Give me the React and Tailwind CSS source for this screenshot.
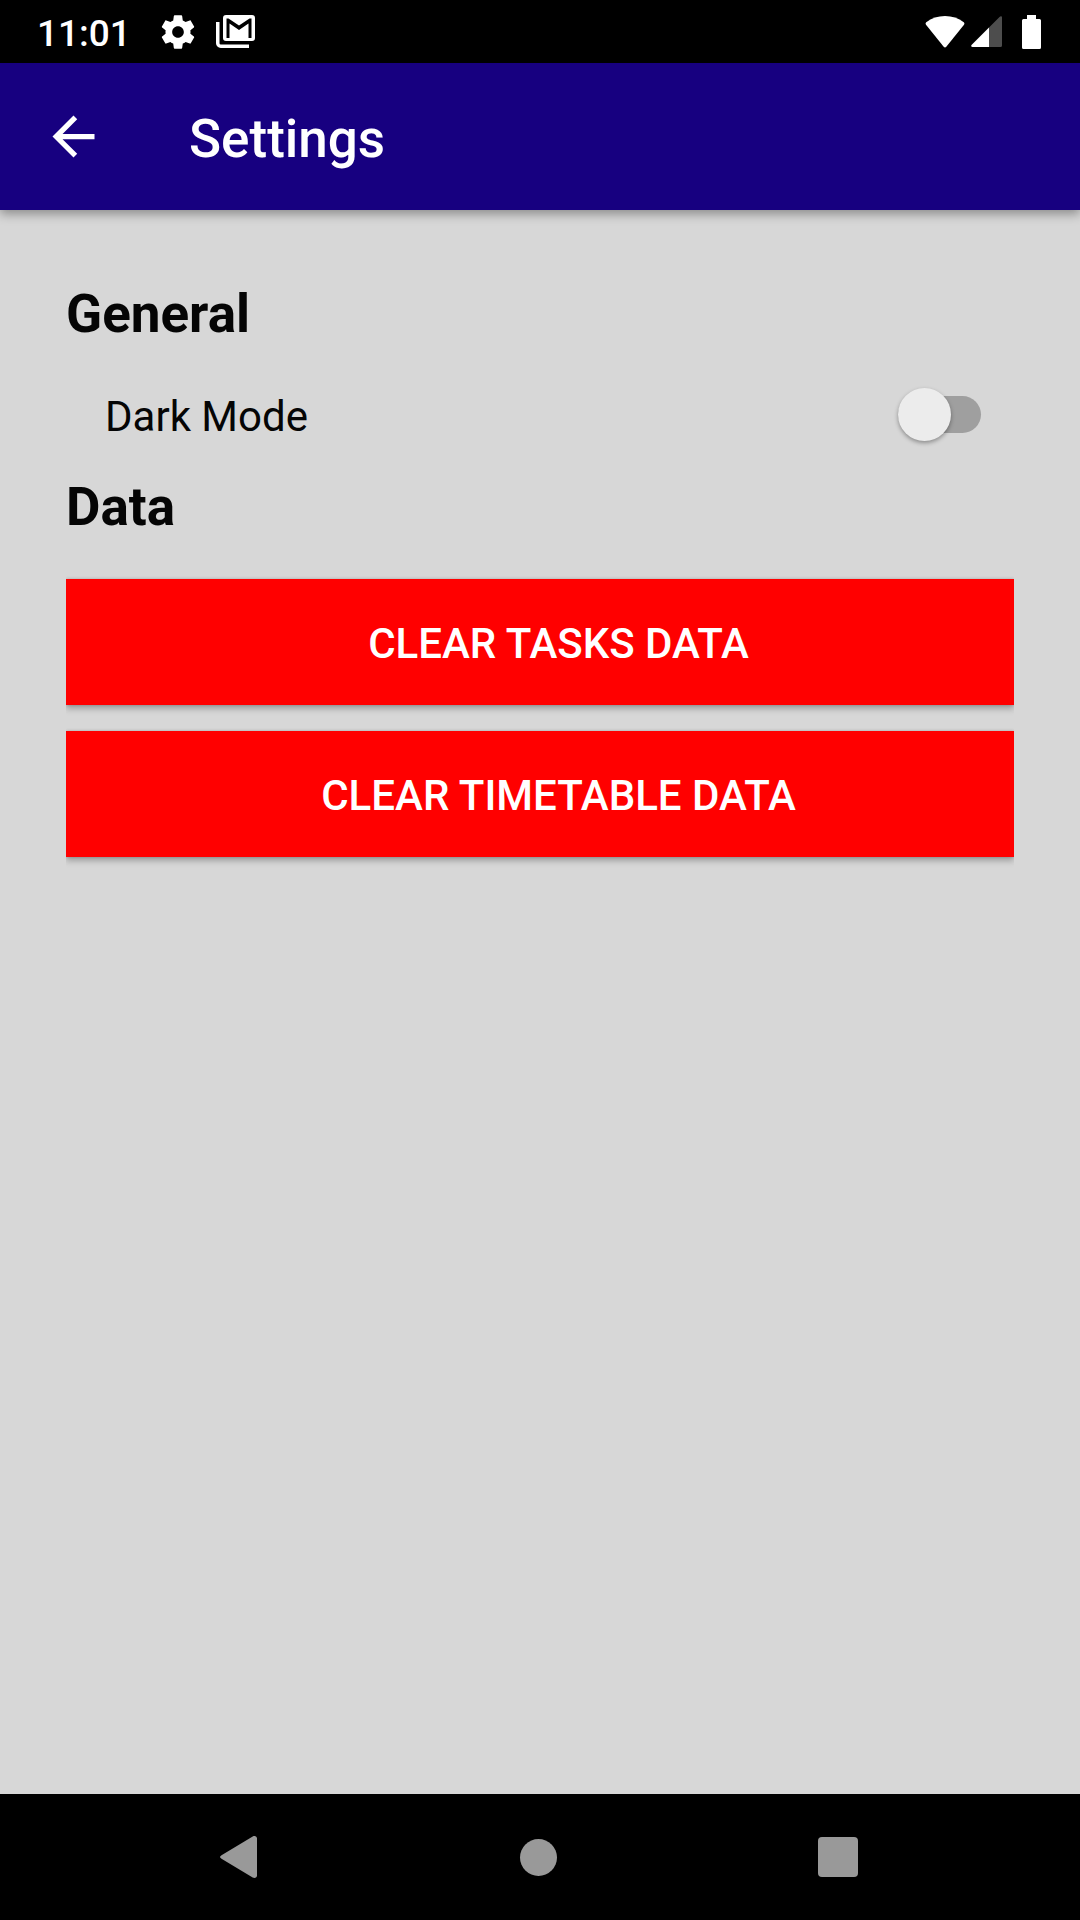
import { useState } from "react";

function StatusBar() {
  return (
    <div className="flex h-[63px] items-center bg-black pr-[39px] pl-[37px] text-white">
      <span className="pt-1 text-[37px] leading-[44px] font-medium">11:01</span>
      <svg className="ml-[27px] size-10" viewBox="0 0 24 24" fill="currentColor" aria-hidden="true">
        <path d="M19.43 12.98c.04-.32.07-.64.07-.98s-.03-.66-.07-.98l2.11-1.65c.19-.15.24-.42.12-.64l-2-3.46c-.12-.22-.39-.3-.61-.22l-2.49 1c-.52-.4-1.08-.73-1.69-.98l-.38-2.65C14.46 2.18 14.25 2 14 2h-4c-.25 0-.46.18-.49.42l-.38 2.65c-.61.25-1.17.59-1.69.98l-2.49-1c-.23-.09-.49 0-.61.22l-2 3.46c-.13.22-.07.49.12.64l2.11 1.65c-.04.32-.07.65-.07.98s.03.66.07.98l-2.11 1.65c-.19.15-.24.42-.12.64l2 3.46c.12.22.39.3.61.22l2.49-1c.52.4 1.08.73 1.69.98l.38 2.65c.03.24.24.42.49.42h4c.25 0 .46-.18.49-.42l.38-2.65c.61-.25 1.17-.59 1.69-.98l2.49 1c.23.09.49 0 .61-.22l2-3.46c.12-.22.07-.49-.12-.64l-2.11-1.65zM12 15.5c-1.930 0-3.500-1.570-3.500-3.500s1.570-3.500 3.500-3.500 3.500 1.570 3.500 3.500-1.570 3.500-3.500 3.500z" />
      </svg>
      <svg className="ml-[18px] h-[33px] w-[39px]" viewBox="0 0 39 33" fill="none" aria-hidden="true">
        <path fill="currentColor" fillRule="evenodd" d="M10 0h26a3 3 0 0 1 3 3v20a3 3 0 0 1-3 3H10a3 3 0 0 1-3-3V3a3 3 0 0 1 3-3zM10.500 3.500V23h3V8.500l9.500 6.500 9.500-6.500V23h3V3.500h-2L23 10.500 12.500 3.500z" />
        <path stroke="currentColor" strokeWidth="3.5" d="M1.750 7v21.250a3 3 0 0 0 3 3H33" />
      </svg>
      <svg className="ml-auto h-8 w-[40px]" viewBox="0 0 40 32" fill="currentColor" aria-hidden="true">
        <path d="M1 8.700a2 2 0 0 1 .2-2.500C6.500 2 13 0 20 0s13.500 2 18.800 6.200a2 2 0 0 1 .2 2.500L21.300 30.800a1.700 1.700 0 0 1-2.600 0z" />
      </svg>
      <svg className="ml-[6px] h-[31px] w-[31px]" viewBox="0 0 31 31" fill="currentColor" aria-hidden="true">
        <path d="M18 11.500V31H1.500C0 31 0 29.500.500 29z" />
        <path opacity=".3" d="M18 11.500 28.500 1C29.500 0 31 0 31 1.500V29.500a1.500 1.500 0 0 1-1.500 1.500H18z" />
      </svg>
      <svg className="ml-5 h-[34px] w-[19px]" viewBox="0 0 19 34" fill="currentColor" aria-hidden="true">
        <path d="M5 0h9v4h3.500A1.500 1.500 0 0 1 19 5.500v27a1.500 1.500 0 0 1-1.500 1.500h-16A1.500 1.500 0 0 1 0 32.500v-27A1.500 1.500 0 0 1 1.500 4H5z" />
      </svg>
    </div>
  );
}

function AppBar() {
  return (
    <header className="z-10 flex h-[147px] items-center bg-[#170080] pl-[42px] text-white shadow-[0_4px_10px_rgba(0,0,0,0.35)]">
      <button type="button" aria-label="Back">
        <svg className="size-[63px]" viewBox="0 0 24 24" fill="currentColor" aria-hidden="true">
          <path d="M20 11H7.830l5.590-5.590L12 4l-8 8 8 8 1.410-1.410L7.830 13H20v-2z" />
        </svg>
      </button>
      <h1 className="ml-[84px] pt-1 text-[53px] leading-[62px] font-medium">Settings</h1>
    </header>
  );
}

function Switch({ id, checked, onChange }) {
  return (
    <span className="relative flex h-[53px] w-[83px] items-center">
      <input
        id={id}
        type="checkbox"
        role="switch"
        checked={checked}
        onChange={(e) => onChange(e.target.checked)}
        className="peer h-[37px] w-full cursor-pointer appearance-none rounded-full bg-[#9f9f9f]"
      />
      <span className="pointer-events-none absolute top-0 left-0 size-[53px] rounded-full bg-[#ececec] shadow-[0_2px_4px_rgba(0,0,0,0.35)] peer-checked:left-[30px]" />
    </span>
  );
}

function DangerButton({ children }) {
  return (
    <div className="[clip-path:inset(-12px_0)]">
      <button
        type="button"
        className="h-[126px] w-full bg-[#ff0000] pt-1 pl-[37px] text-[42px] leading-[50px] font-medium text-white shadow-[0_4px_6px_rgba(0,0,0,0.25),0_0_3px_rgba(0,0,0,0.2)]"
      >
        {children}
      </button>
    </div>
  );
}

function NavigationBar() {
  return (
    <nav className="grid h-[126px] grid-cols-3 bg-black pr-[93px] pl-[90px] text-[#999999]">
      <button type="button" aria-label="Back" className="flex items-center justify-center">
        <svg className="h-[42px] w-10" viewBox="0 0 40 42" fill="currentColor" aria-hidden="true">
          <path d="M1.500 19.200 32.700.500C35 -.5 37 .500 37 2.500v37c0 2-2 3-4.300 2L1.500 22.800c-2-1.300-2-2.300 0-3.600z" />
        </svg>
      </button>
      <button type="button" aria-label="Home" className="flex items-center justify-center">
        <span className="size-[37px] rounded-full bg-current" />
      </button>
      <button type="button" aria-label="Overview" className="flex items-center justify-center">
        <span className="size-10 rounded-sm bg-current" />
      </button>
    </nav>
  );
}

export default function App() {
  const [dark, setDark] = useState(false);
  return (
    <div className="flex min-h-screen flex-col bg-[#d7d7d7] font-['Roboto',sans-serif]">
      <StatusBar />
      <AppBar />
      <main className="flex-1 px-[66px] pt-[73px] text-[#050505]">
        <h2 className="text-[53px] leading-[62px] font-bold">General</h2>
        <div className="mt-[42px] mb-[35px] flex h-[54px] items-center justify-between pr-[33px] pl-[39px]">
          <label htmlFor="dark-mode" className="pt-1.5 text-[42px] leading-[50px]">
            Dark Mode
          </label>
          <Switch id="dark-mode" checked={dark} onChange={setDark} />
        </div>
        <h2 className="text-[53px] leading-[62px] font-bold">Data</h2>
        <div className="mt-[41px] flex flex-col gap-[26px]">
          <DangerButton>CLEAR TASKS DATA</DangerButton>
          <DangerButton>CLEAR TIMETABLE DATA</DangerButton>
        </div>
      </main>
      <NavigationBar />
    </div>
  );
}
